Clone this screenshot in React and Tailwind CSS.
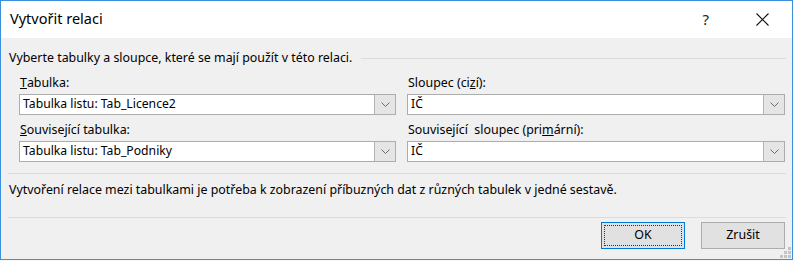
import React from 'react';

const font = { fontFamily: '"Noto Sans", "Liberation Sans", sans-serif' };

function Chevron() {
  return (
    <svg width="9" height="5" viewBox="0 0 9 5" fill="none" stroke="#6a6a6a" strokeWidth="1">
      <path d="M0.5 0.5 L4.5 4.5 L8.5 0.5" />
    </svg>
  );
}

function Combo({ value, width }) {
  return (
    <div className={`flex h-[21px] ${width} border border-[#adadad] bg-white`}>
      <div className="flex flex-1 items-center pl-[3px] text-[12.2px] text-black">{value}</div>
      <div className="flex w-[21px] items-center justify-center border-l border-[#b5b5b5] bg-[#e5e5e5]">
        <Chevron />
      </div>
    </div>
  );
}

function Label({ children }) {
  return <div className="flex h-[16px] items-center whitespace-pre pl-[1px] text-[12.4px] text-black">{children}</div>;
}

function ResizeGrip() {
  const dots = [
    [8, 0],
    [4, 4], [8, 4],
    [0, 8], [4, 8], [8, 8],
  ];
  return (
    <div className="absolute bottom-[1px] right-[1px] h-[11px] w-[11px]">
      {dots.map(([x, y], i) => (
        <div
          key={i}
          className="absolute h-[3px] w-[3px] bg-[#c4c4c4]"
          style={{ left: x, top: y }}
        />
      ))}
    </div>
  );
}

export default function App() {
  return (
    <div className="h-[261px] w-[794px] bg-[#f7f7f7]" style={font}>
      <div className="relative flex h-[260px] w-[793px] flex-col border border-[#3b8fdc] bg-[#f0f0f0]">
        {/* Title bar */}
        <div className="flex h-[37px] items-center bg-white pl-[9px] pr-[23px]">
          <span className="flex-1 pb-[1px] text-[14.5px] text-black">Vytvořit relaci</span>
          <span className="mr-[47px] text-[15px] text-[#222]">?</span>
          <svg width="13" height="13" viewBox="0 0 13 13" stroke="#111" strokeWidth="1.1">
            <path d="M0.5 0.5 L12.5 12.5 M12.5 0.5 L0.5 12.5" />
          </svg>
        </div>

        {/* Group header */}
        <div className="mt-[12px] flex h-[16px] items-center pl-[8px] pr-[6px]">
          <span className="text-[12.4px] text-black">Vyberte tabulky a sloupce, které se mají použít v této relaci.</span>
          <div className="ml-[9px] h-0 flex-1 border-t border-[#dcdcdc]" />
        </div>

        {/* Columns */}
        <div className="mt-[9px] flex gap-[11px] pl-[18px]">
          <div className="flex flex-col">
            <Label><u>T</u>abulka:</Label>
            <div className="mt-[3px]">
              <Combo value="Tabulka listu: Tab_Licence2" width="w-[377px]" />
            </div>
            <div className="mt-[7px]">
              <Label><u>S</u>ouvisející tabulka:</Label>
            </div>
            <div className="mt-[3px]">
              <Combo value="Tabulka listu: Tab_Podniky" width="w-[377px]" />
            </div>
          </div>
          <div className="flex flex-col">
            <Label>Sloupec (ci<u>z</u>í):</Label>
            <div className="mt-[3px]">
              <Combo value="IČ" width="w-[378px]" />
            </div>
            <div className="mt-[7px]">
              <Label>Související  sloupec (pri<u>m</u>ární):</Label>
            </div>
            <div className="mt-[3px]">
              <Combo value="IČ" width="w-[378px]" />
            </div>
          </div>
        </div>

        <div className="ml-[7px] mr-[6px] mt-[11px] border-t border-[#dcdcdc]" />

        <div className="mt-[8px] flex h-[16px] items-center pl-[8px] text-[12.4px] text-black">
          Vytvoření relace mezi tabulkami je potřeba k zobrazení příbuzných dat z různých tabulek v jedné sestavě.
        </div>

        <div className="ml-[7px] mr-[6px] mt-[19px] border-t border-[#dcdcdc]" />

        {/* Buttons */}
        <div className="mt-[4px] flex justify-end gap-[16px] pr-[7px]">
          <button className="relative flex h-[27px] w-[84px] items-center justify-center border border-[#0078d7] bg-[#e1e1e1] text-[12.4px] text-black">
            <span className="absolute inset-[2px] border border-dotted border-[#333]" />
            OK
          </button>
          <button className="flex h-[27px] w-[84px] items-center justify-center border border-[#adadad] bg-[#e1e1e1] text-[12.4px] text-black">
            Zrušit
          </button>
        </div>

        <ResizeGrip />
      </div>
    </div>
  );
}
